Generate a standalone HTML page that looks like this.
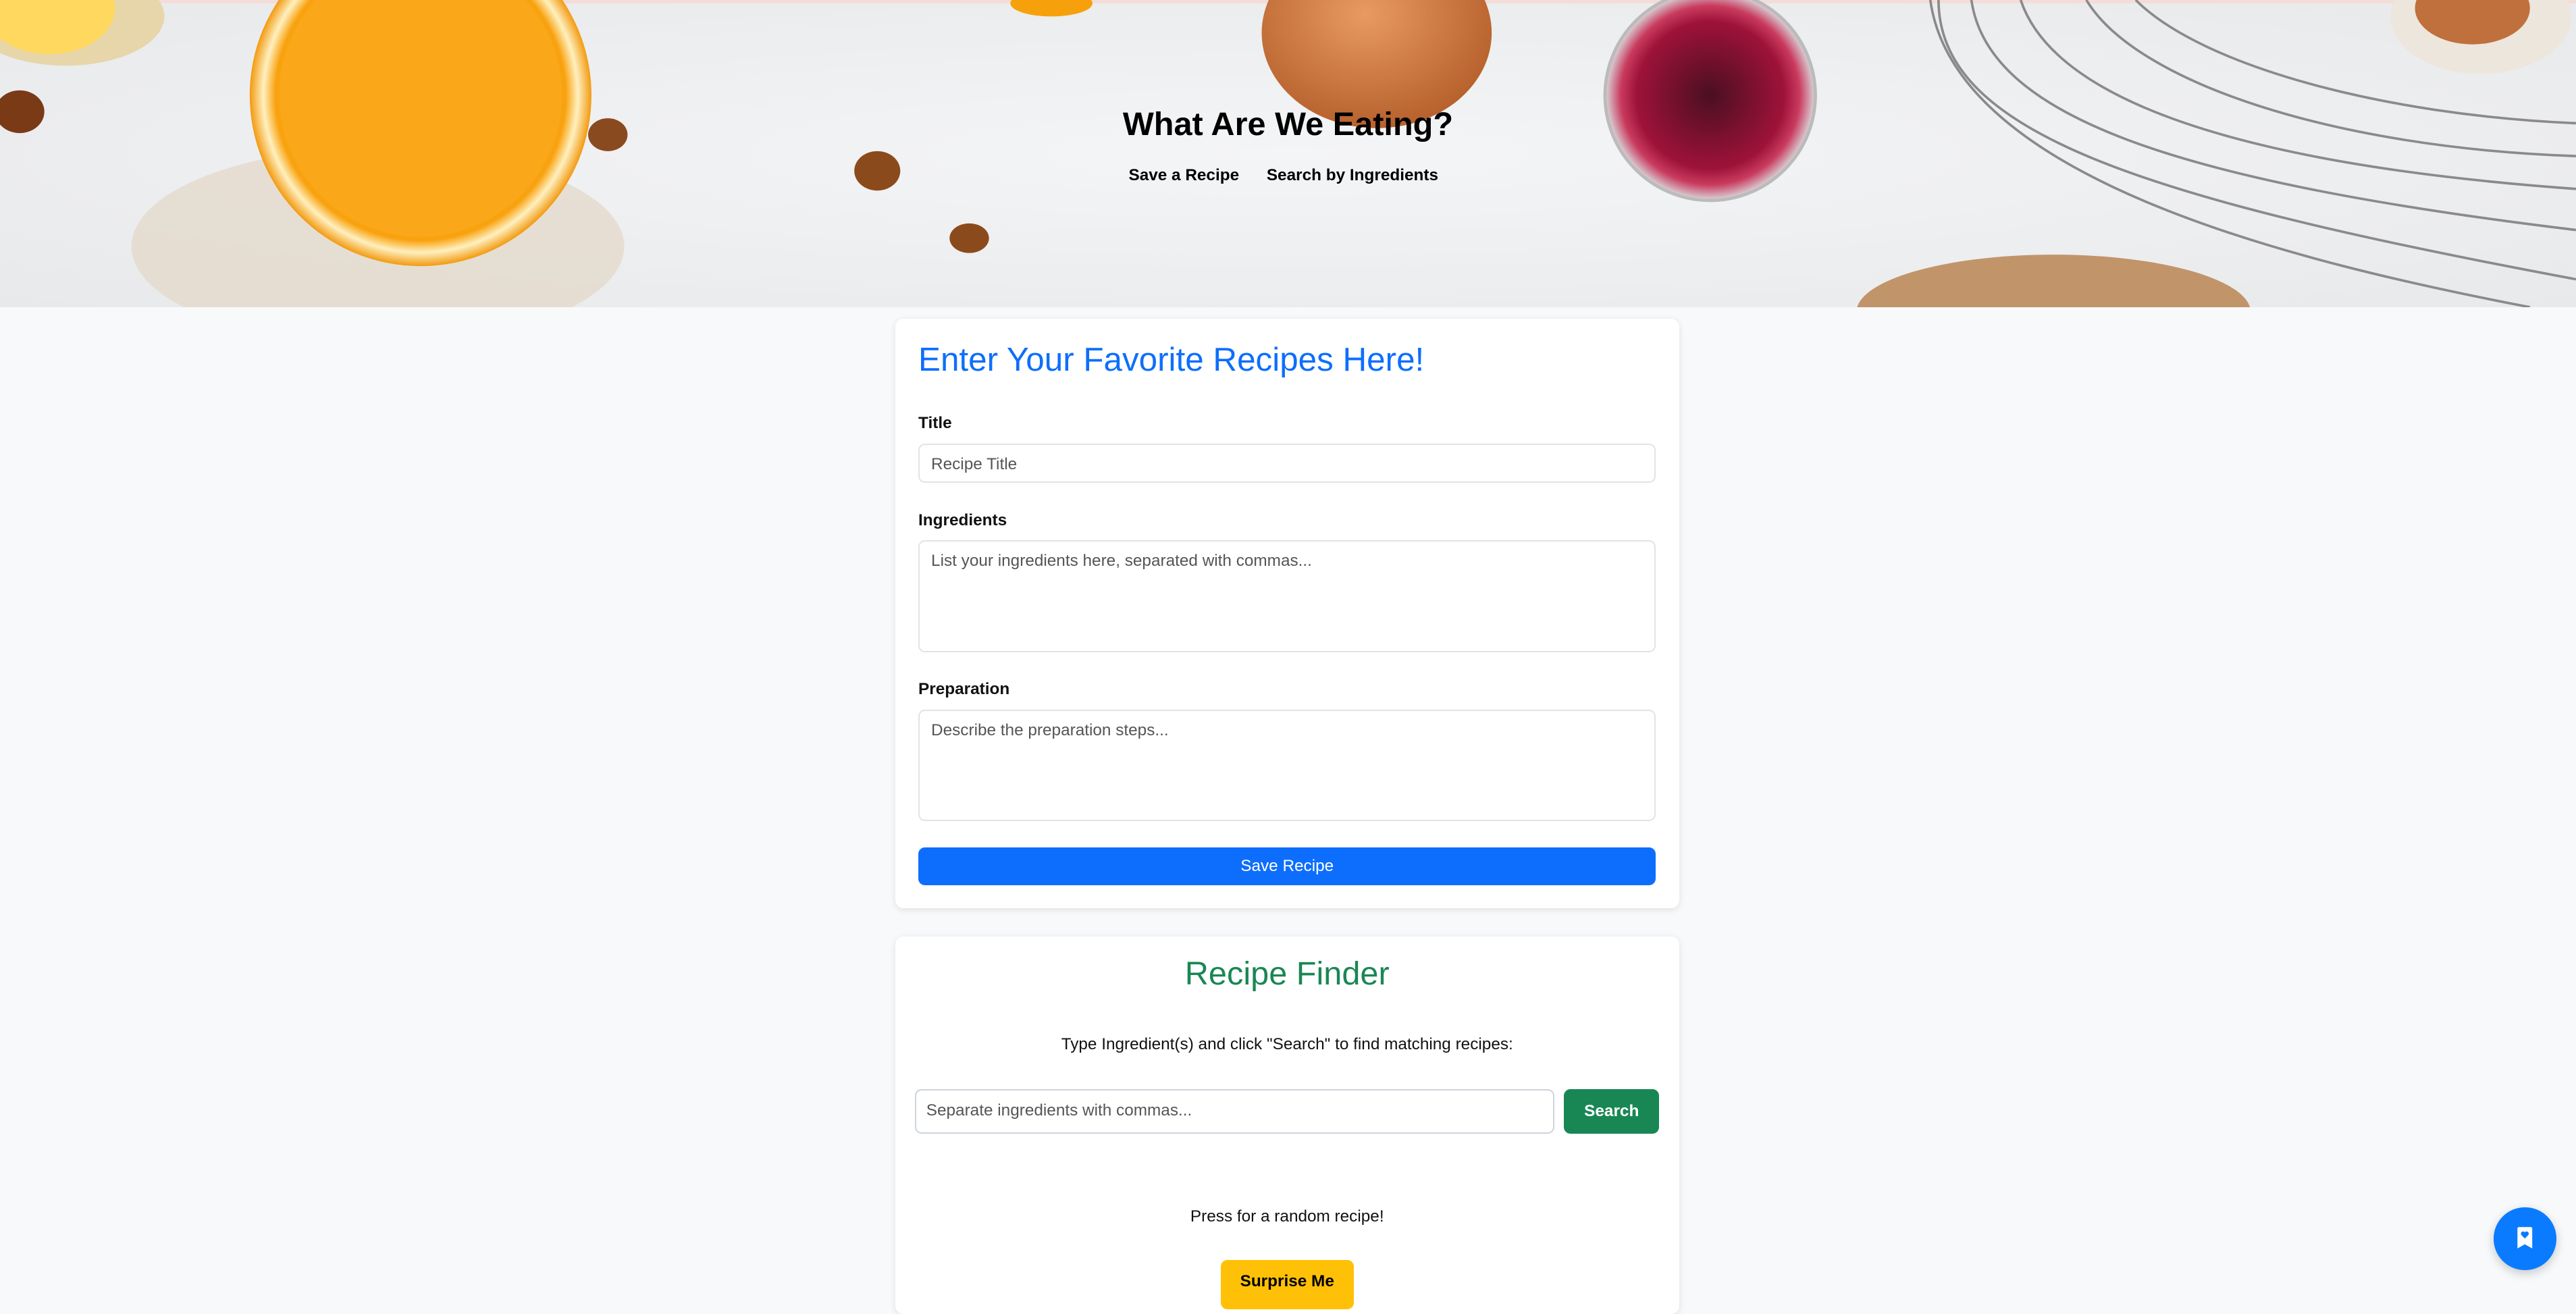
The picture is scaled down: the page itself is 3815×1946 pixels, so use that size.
<!DOCTYPE html>
<html><head><meta charset="utf-8"><style>
html{zoom:2.4330}
body{margin:0;width:1568px;height:783.8px;overflow:hidden;background:#f8f9fa;font-family:"Liberation Sans",Arial,sans-serif;position:relative;color:#212529}
.a{position:absolute}
.card{position:absolute;background:#fff;border-radius:5px;box-shadow:0 1px 4px rgba(0,0,0,.1)}
.lbl{position:absolute;left:14px;font-weight:bold;font-size:10px;color:#111}
.inp{position:absolute;left:14px;width:449px;border:1px solid #e2e3e5;border-radius:4px;background:#fff;font-size:10px;color:#555;box-sizing:border-box;padding:6px 7px}
</style></head><body>
<svg class="a" style="left:0;top:0" width="1568" height="187" viewBox="0 0 1568 187">
<defs>
<radialGradient id="bg" cx="50%" cy="50%" r="70%"><stop offset="0" stop-color="#f4f5f6"/><stop offset="1" stop-color="#e8e9eb"/></radialGradient>
<radialGradient id="or" cx="50%" cy="50%" r="50%"><stop offset="0" stop-color="#ffc640"/><stop offset=".85" stop-color="#f9a20f"/><stop offset=".92" stop-color="#fff0c0"/><stop offset="1" stop-color="#f29a10"/></radialGradient>
<radialGradient id="egg" cx="45%" cy="40%" r="60%"><stop offset="0" stop-color="#e89a62"/><stop offset="1" stop-color="#b8622e"/></radialGradient>
<radialGradient id="jam" cx="50%" cy="50%" r="50%"><stop offset="0" stop-color="#4a0f22"/><stop offset=".7" stop-color="#9e1238"/><stop offset=".85" stop-color="#c93a5e"/><stop offset="1" stop-color="#d9d9dc"/></radialGradient>
</defs>
<rect width="1568" height="187" fill="url(#bg)"/>
<rect width="1568" height="2" fill="#f4dcd8"/>
<ellipse cx="230" cy="150" rx="150" ry="60" fill="#e2d7c6" opacity=".7"/>
<ellipse cx="40" cy="10" rx="60" ry="30" fill="#e6d6aa"/>
<ellipse cx="30" cy="5" rx="40" ry="28" fill="#ffd860"/>
<circle cx="256" cy="58" r="104" fill="url(#or)"/>
<circle cx="256" cy="58" r="86" fill="#faa81a"/>
<ellipse cx="640" cy="2" rx="25" ry="8" fill="#f6a10c"/>
<ellipse cx="12" cy="68" rx="15" ry="13" fill="#7a3a16"/>
<ellipse cx="370" cy="82" rx="12" ry="10" fill="#8a4a1f"/>
<ellipse cx="534" cy="104" rx="14" ry="12" fill="#8b4a1c"/>
<ellipse cx="590" cy="145" rx="12" ry="9" fill="#8b4a1c"/>
<ellipse cx="838" cy="20" rx="70" ry="58" fill="url(#egg)"/>
<circle cx="1041" cy="58" r="64" fill="url(#jam)"/>
<circle cx="1041" cy="58" r="64" fill="none" stroke="#bbb" stroke-width="2"/>
<ellipse cx="1510" cy="10" rx="55" ry="35" fill="#ece6dd"/>
<ellipse cx="1505" cy="5" rx="35" ry="22" fill="#c0703c"/>
<ellipse cx="1250" cy="190" rx="120" ry="35" fill="#c2946a"/>
<g fill="none" stroke="#8a8a8a" stroke-width="1.5">
<path d="M1180 0 C1180 80 1300 120 1568 170"/>
<path d="M1200 0 C1210 70 1320 110 1568 140"/>
<path d="M1230 0 C1250 60 1360 100 1568 115"/>
<path d="M1270 0 C1300 50 1420 90 1568 95"/>
<path d="M1175 0 C1190 110 1400 160 1540 187"/>
<path d="M1300 0 C1340 40 1450 70 1568 75"/>
</g>
</svg>
<div class="a" style="left:0;width:1568px;top:64px;text-align:center;font-weight:bold;font-size:20px;color:#000">What Are We Eating?</div>
<div class="a" style="left:687px;top:101px;font-weight:bold;font-size:10px;color:#000">Save a Recipe</div>
<div class="a" style="left:771px;top:101px;font-weight:bold;font-size:10px;color:#000">Search by Ingredients</div>

<div class="card" style="left:545px;top:194px;width:477px;height:359px">
<div class="a" style="left:14px;top:13px;font-size:20.3px;color:#0d6efd">Enter Your Favorite Recipes Here!</div>
<div class="lbl" style="top:58px">Title</div>
<div class="inp" style="top:76px;height:24px">Recipe Title</div>
<div class="lbl" style="top:117px">Ingredients</div>
<div class="inp" style="top:135px;height:68px">List your ingredients here, separated with commas...</div>
<div class="lbl" style="top:220px">Preparation</div>
<div class="inp" style="top:238px;height:68px">Describe the preparation steps...</div>
<div class="a" style="left:14px;top:322px;width:449px;height:23px;background:#0d6efd;border-radius:4px;color:#fff;font-size:10px;text-align:center;line-height:23px">Save Recipe</div>
</div>

<div class="card" style="left:545px;top:570px;width:477px;height:230px">
<div class="a" style="left:0;width:477px;top:11px;text-align:center;font-size:20px;color:#198754">Recipe Finder</div>
<div class="a" style="left:0;width:477px;top:60px;text-align:center;font-size:10px;color:#111">Type Ingredient(s) and click "Search" to find matching recipes:</div>
<div class="a" style="left:12px;top:93px;width:389px;height:27px;border:1px solid #ced4da;border-radius:4px;box-sizing:border-box;font-size:10px;color:#555;padding:0 6px;line-height:25px">Separate ingredients with commas...</div>
<div class="a" style="left:407px;top:93px;width:58px;height:27px;background:#198754;border-radius:4px;color:#fff;font-weight:bold;font-size:10px;text-align:center;line-height:27px">Search</div>
<div class="a" style="left:0;width:477px;top:165px;text-align:center;font-size:10px;color:#111">Press for a random recipe!</div>
<div class="a" style="left:198px;top:197px;width:81px;height:30px;background:#ffc107;border-radius:4px;color:#000;font-weight:bold;font-size:10px;text-align:center;line-height:26px">Surprise Me</div>
</div>

<div class="a" style="left:1518px;top:735px;width:38px;height:38px;border-radius:50%;background:#0a7bff;box-shadow:0 2px 6px rgba(0,0,0,.2)">
<svg width="38" height="38" viewBox="0 0 38 38"><path d="M14.5 13 Q14.5 12 15.5 12 H22.5 Q23.5 12 23.5 13 V25 L19 22.5 L14.5 25 Z" fill="#fff"/><path d="M19 19 L16.9 16.9 A1.3 1.3 0 0 1 19 15.2 A1.3 1.3 0 0 1 21.1 16.9 Z" fill="#0a7bff"/></svg>
</div>
</body></html>
